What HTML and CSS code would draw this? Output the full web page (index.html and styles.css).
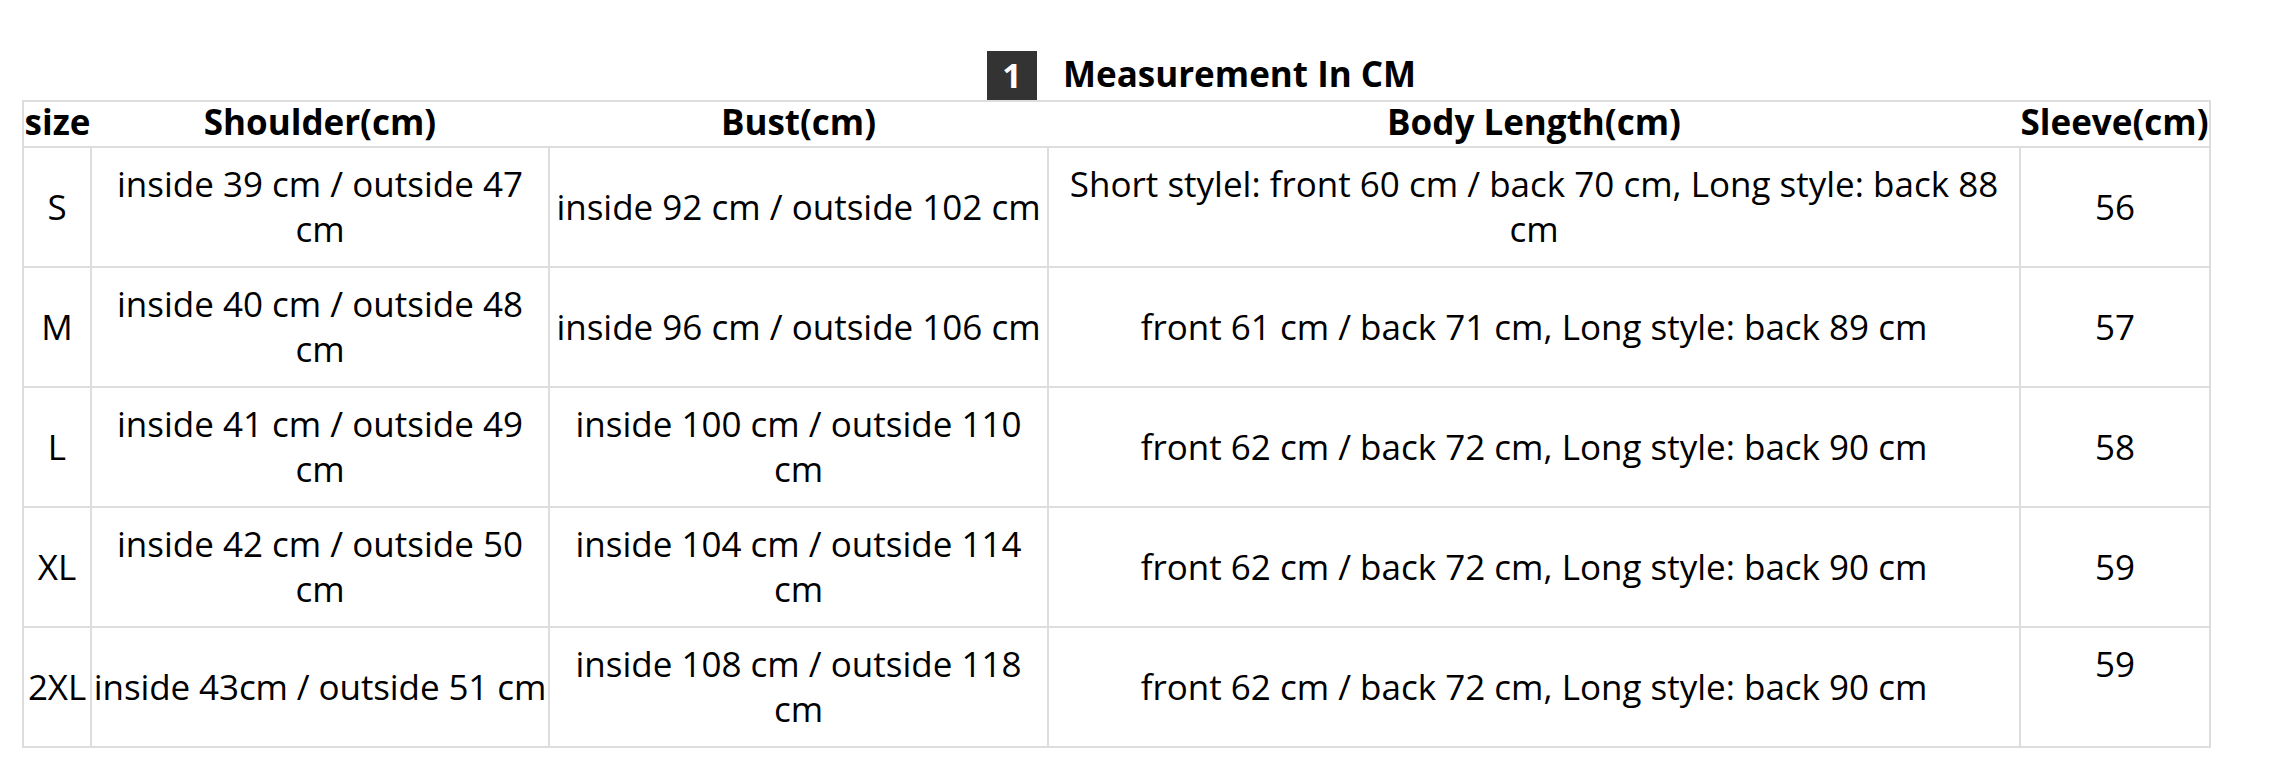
FILE: index.html
```html
<!DOCTYPE html>
<html lang="en">
<head>
<meta charset="utf-8">
<title>Measurement In CM</title>
<link rel="stylesheet" href="styles.css">
</head>
<body>
<div class="page">
  <div class="caption">
    <span class="badge">1</span>
    <span class="caption-title">Measurement In CM</span>
  </div>
  <table class="sizes">
    <colgroup>
      <col class="c-size">
      <col class="c-shoulder">
      <col class="c-bust">
      <col class="c-length">
      <col class="c-sleeve">
    </colgroup>
    <thead>
      <tr>
        <th>size</th>
        <th>Shoulder(cm)</th>
        <th>Bust(cm)</th>
        <th>Body Length(cm)</th>
        <th>Sleeve(cm)</th>
      </tr>
    </thead>
    <tbody>
      <tr>
        <td>S</td>
        <td>inside 39 cm / outside 47 cm</td>
        <td>inside 92 cm / outside 102 cm</td>
        <td>Short stylel: front 60 cm / back 70 cm, Long style: back 88 cm</td>
        <td>56</td>
      </tr>
      <tr>
        <td>M</td>
        <td>inside 40 cm / outside 48 cm</td>
        <td>inside 96 cm / outside 106 cm</td>
        <td>front 61 cm / back 71 cm, Long style: back 89 cm</td>
        <td>57</td>
      </tr>
      <tr>
        <td>L</td>
        <td>inside 41 cm / outside 49 cm</td>
        <td>inside 100 cm / outside 110 cm</td>
        <td>front 62 cm / back 72 cm, Long style: back 90 cm</td>
        <td>58</td>
      </tr>
      <tr>
        <td>XL</td>
        <td>inside 42 cm / outside 50 cm</td>
        <td>inside 104 cm / outside 114 cm</td>
        <td>front 62 cm / back 72 cm, Long style: back 90 cm</td>
        <td>59</td>
      </tr>
      <tr>
        <td class="tight">2XL</td>
        <td class="tight">inside 43cm / outside 51 cm</td>
        <td>inside 108 cm / outside 118 cm</td>
        <td>front 62 cm / back 72 cm, Long style: back 90 cm</td>
        <td><span class="raised">59</span></td>
      </tr>
    </tbody>
  </table>
</div>
</body>
</html>
```

FILE: styles.css
```css
html, body {
  margin: 0;
  padding: 0;
  background: #ffffff;
}

body {
  font-family: "Open Sans", "Liberation Sans", sans-serif;
  color: #000000;
}

.page {
  padding: 50px 0 0 22px;
}

.caption {
  display: flex;
  align-items: center;
  gap: 26px;
  margin-left: 965px;
  height: 50px;
}

.badge {
  width: 50px;
  height: 49px;
  background: #333333;
  color: #ffffff;
  font-weight: 700;
  font-size: 34px;
  line-height: 49px;
  text-align: center;
}

.caption-title {
  font-weight: 700;
  font-size: 35px;
  line-height: 40px;
  padding-bottom: 3px;
}

.sizes {
  width: 2187px;
  border-collapse: collapse;
  table-layout: fixed;
  border: 2px solid #dddddd;
  font-size: 35px;
  line-height: 45px;
}

.c-size { width: 68px; }
.c-shoulder { width: 458px; }
.c-bust { width: 499px; }
.c-length { width: 972px; }
.c-sleeve { width: 190px; }

.sizes th {
  height: 39px;
  padding: 0 0 5px;
  font-weight: 700;
  line-height: 39px;
  text-align: center;
  vertical-align: middle;
  border-bottom: 2px solid #dddddd;
  white-space: nowrap;
}

.sizes td {
  height: 116px;
  padding: 0 0 2px;
  text-align: center;
  vertical-align: middle;
  border: 2px solid #dddddd;
}

.sizes td.tight {
  white-space: nowrap;
  letter-spacing: -0.1px;
}

.raised {
  display: inline-block;
  padding-bottom: 45px;
}
```
